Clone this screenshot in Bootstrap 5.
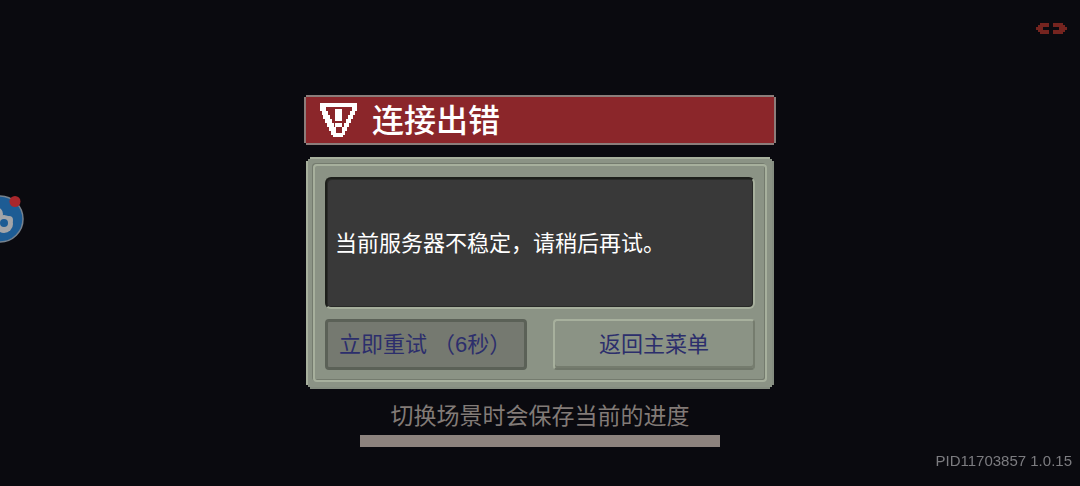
<!DOCTYPE html>
<html lang="zh-CN">
<head>
<meta charset="utf-8">
<meta name="viewport" content="width=device-width, initial-scale=1">
<title>连接出错</title>
<link href="https://cdn.jsdelivr.net/npm/bootstrap@5.3.0/dist/css/bootstrap.min.css" rel="stylesheet">
<script src="https://cdn.jsdelivr.net/npm/bootstrap@5.3.0/dist/js/bootstrap.bundle.min.js" defer></script>
<style>
  body { background: #0a0a0f; font-family: "Liberation Sans", "Noto Sans CJK SC", sans-serif; }
  .screen { padding-top: 95px; }
  .dialog-col { width: 100%; max-width: 472px; }
  /* stepped corners, as on pixel-art frames */
  .title-bar {
    margin: 2px; padding: 2px 14px 0; height: 46px; gap: 14px; background: #8b262a; color: #fff;
    box-shadow: 0 -2px #8b7d7a, 0 2px #8b7d7a, -2px 0 #8b7d7a, 2px 0 #8b7d7a;
  }
  .title-bar h1 { font-size: 32px; line-height: 44px; font-weight: 500; }
  .title-bar svg { margin-bottom: 2px; }
  .frame {
    margin: 14px 2px 0; padding: 5px; background: #8b9385;
    border: 2px solid; border-color: #a7b09d #858d80 #858d80 #a7b09d;
    clip-path: polygon(4px 0, calc(100% - 4px) 0, calc(100% - 4px) 2px, calc(100% - 2px) 2px, calc(100% - 2px) 4px, 100% 4px, 100% calc(100% - 4px), calc(100% - 2px) calc(100% - 4px), calc(100% - 2px) calc(100% - 2px), calc(100% - 4px) calc(100% - 2px), calc(100% - 4px) 100%, 4px 100%, 4px calc(100% - 2px), 2px calc(100% - 2px), 2px calc(100% - 4px), 0 calc(100% - 4px), 0 4px, 2px 4px, 2px 2px, 4px 2px);
  }
  .frame-inner {
    padding: 11px 10px 10px; border: 2px solid #a7b09d; border-radius: 4px;
    box-shadow: -1px -1px #747b6e, inset -1px -1px #747b6e;
  }
  .message {
    height: 132px; padding: 0 8px; background: #393939; color: #fff; font-size: 22px;
    border: 2px solid; border-color: #1d1f1b #a7b09d #a7b09d #1d1f1b; border-radius: 6px;
    box-shadow: inset 1px 1px #292a28, inset -1px -1px #292a28;
  }
  .actions { grid-template-columns: 1fr 1fr; gap: 26px; margin-top: 10px; }
  .key, .key:hover {
    height: 51px; padding: 0; font-size: 22px; line-height: 46px; color: #2c2e6c;
    background: #8b9385; border: 2px solid; border-color: #a7b09d #757c6e #6f7669 #a7b09d; border-radius: 4px;
    box-shadow: inset 0 -2px #757c6e;
  }
  .key:disabled {
    opacity: 1; padding-left: 11px; text-align: left; color: #2c2e6c; background: #757970;
    border: 3px solid #5b6157; line-height: 44px; box-shadow: none;
  }
  .hint { margin: 11px 0 3px; color: #827b77; font-size: 23px; line-height: 32px; }
  .load-bar { width: 360px; max-width: 100%; height: 12px; background: #2a2827; }
  .load-bar .progress-bar { background: #8d837e; }
  .version { right: 8px; bottom: 16px; color: #7c7c80; font-size: 15px; line-height: 18px; }
  .signal { top: 23px; right: 13px; }
  .float-ball { left: 0; top: 194px; line-height: 0; }
</style>
</head>
<body>
<main class="screen min-vh-100 d-flex flex-column align-items-center">
  <section class="dialog-col" role="alertdialog" aria-labelledby="dlg-title">
    <header class="title-bar d-flex align-items-center">
      <svg width="38" height="34" viewBox="0 0 38 34" shape-rendering="crispEdges" aria-hidden="true">
        <path fill="#fff" fill-rule="evenodd" d="M0 0h37v8h-2v4h-2v4h-2v4h-2v4h-2v4h-2v4h-2v2H13v-2h-2v-4H9v-4H7v-4H5v-4H3v-4H2V8H0zM6 4v4h2v4h2v4h2v4h2v4h2v6h6v-6h2v-4h2v-4h2v-4h2V8h2V4z"/>
        <path fill="#fff" d="M15 6h7v12h-7zM15 20h7v4h-7z"/>
      </svg>
      <h1 id="dlg-title" class="m-0">连接出错</h1>
    </header>
    <div class="frame">
      <div class="frame-inner">
        <div class="message d-flex align-items-center">
          <p class="m-0">当前服务器不稳定，请稍后再试。</p>
        </div>
        <div class="d-grid actions">
          <button type="button" class="btn key" disabled>立即重试 （6秒）</button>
          <button type="button" class="btn key">返回主菜单</button>
        </div>
      </div>
    </div>
  </section>
  <p class="hint">切换场景时会保存当前的进度</p>
  <div class="progress rounded-0 load-bar" role="progressbar" aria-label="进度" aria-valuenow="100" aria-valuemin="0" aria-valuemax="100">
    <div class="progress-bar w-100"></div>
  </div>
</main>

<svg class="signal position-fixed" width="31" height="12" viewBox="0 0 31 12" shape-rendering="crispEdges" aria-hidden="true">
  <path fill="#75241f" d="M4 0h9v4H7v3h6v4H4V9H2V7H0V4h2V2h2zM17 0h10v2h2v2h2v3h-2v2h-2v2H17V7h6V4h-6z"/>
</svg>

<button type="button" class="float-ball position-fixed border-0 bg-transparent p-0" aria-label="悬浮球">
  <svg width="26" height="50" viewBox="0 0 26 50">
    <circle cx="0" cy="25" r="23" fill="#1d5c94" stroke="#76828e" stroke-width="1.5"/>
    <g fill="#a3a5a8"><circle cx="4" cy="30" r="9"/><circle cx="-4" cy="20" r="7"/><circle cx="9" cy="26" r="4"/></g>
    <circle cx="4" cy="29" r="4" fill="#1d5c94"/>
    <circle cx="15" cy="7.500" r="5.500" fill="#a9272c"/>
  </svg>
</button>

<div class="version position-fixed">PID11703857 1.0.15</div>
</body>
</html>
